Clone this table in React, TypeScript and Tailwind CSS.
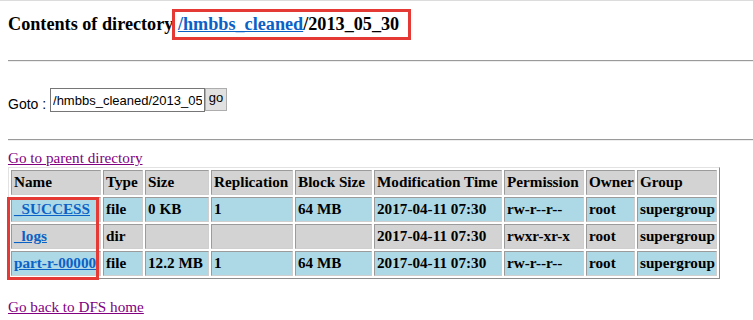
import React from 'react';

type Entry = {
  name: string;
  type: string;
  size: string;
  rep: string;
  block: string;
  time: string;
  perm: string;
  owner: string;
  group: string;
  dir: boolean;
};

const entries: Entry[] = [
  { name: '_SUCCESS', type: 'file', size: '0 KB', rep: '1', block: '64 MB', time: '2017-04-11 07:30', perm: 'rw-r--r--', owner: 'root', group: 'supergroup', dir: false },
  { name: '_logs', type: 'dir', size: '', rep: '', block: '', time: '2017-04-11 07:30', perm: 'rwxr-xr-x', owner: 'root', group: 'supergroup', dir: true },
  { name: 'part-r-00000', type: 'file', size: '12.2 MB', rep: '1', block: '64 MB', time: '2017-04-11 07:30', perm: 'rw-r--r--', owner: 'root', group: 'supergroup', dir: false },
];

const cell =
  'h-[25px] px-[2px] py-0 text-left align-middle font-bold text-[15.2px] whitespace-nowrap overflow-hidden border border-t-[#9b9b9b] border-l-[#9b9b9b] border-b-[#cfcfcf] border-r-[#cfcfcf]';

export default function App() {
  return (
    <div className="relative w-[753px] h-[320px] overflow-hidden bg-white text-black font-['Liberation_Serif',serif] text-[15.2px]">
      <div className="h-px bg-[#dcdcdc]" />

      {/* heading */}
      <div className="mt-[13px] ml-[8px] text-[18.2px] font-bold leading-[21px] whitespace-nowrap">
        Contents of directory{' '}
        <a className="text-[#0a62c6] underline">/hmbbs_cleaned</a>/2013_05_30
      </div>

      <div className="mt-[25px] ml-[8px] h-[2px] border-t border-t-[#9a9a9a] border-b border-b-[#eeeeee]" />

      {/* goto */}
      <div className="mt-[26px] ml-[8px] flex items-start font-['Liberation_Sans',Arial,sans-serif]">
        <span className="mt-[8px] text-[14px] leading-[16px] whitespace-pre">Goto : </span>
        <input
          readOnly
          value="/hmbbs_cleaned/2013_05_30"
          className="w-[155px] h-[24px] border border-[#767676] px-[2px] text-[13px] text-black outline-none"
        />
        <button className="w-[22px] h-[23px] bg-[#e1e1e1] border border-[#adadad] text-[13px] leading-[15px] pb-[4px]">
          go
        </button>
      </div>

      <div className="mt-[27px] ml-[8px] h-[2px] border-t border-t-[#9a9a9a] border-b border-b-[#eeeeee]" />

      <div className="mt-[7px] ml-[8px] leading-[19px]">
        <a className="text-[#800080] underline">Go to parent directory</a>
      </div>

      {/* listing */}
      <table className="ml-[8px] w-[712px] table-fixed border-separate border-spacing-[2px] border border-t-[#e2e2e2] border-l-[#e2e2e2] border-b-[#8c8c8c] border-r-[#8c8c8c]">
        <thead>
          <tr className="bg-[#d3d3d3]">
            <th className={`${cell} w-[90px]`}>Name</th>
            <th className={`${cell} w-[40px]`}>Type</th>
            <th className={`${cell} w-[64px]`}>Size</th>
            <th className={`${cell} w-[82px]`}>Replication</th>
            <th className={`${cell} w-[77px]`}>Block Size</th>
            <th className={`${cell} w-[128px]`}>Modification Time</th>
            <th className={`${cell} w-[80px]`}>Permission</th>
            <th className={`${cell} w-[49px]`}>Owner</th>
            <th className={`${cell} w-[80px]`}>Group</th>
          </tr>
        </thead>
        <tbody>
          {entries.map((e) => (
            <tr key={e.name} className={e.dir ? 'bg-[#d3d3d3]' : 'bg-[#add8e6]'}>
              <td className={cell}>
                <a className="text-[#0a62c6] underline">{e.name}</a>
              </td>
              <td className={cell}>{e.type}</td>
              <td className={cell}>{e.size}</td>
              <td className={cell}>{e.rep}</td>
              <td className={cell}>{e.block}</td>
              <td className={cell}>{e.time}</td>
              <td className={cell}>{e.perm}</td>
              <td className={cell}>{e.owner}</td>
              <td className={cell}>{e.group}</td>
            </tr>
          ))}
        </tbody>
      </table>

      <div className="mt-[18px] ml-[8px] leading-[19px]">
        <a className="text-[#800080] underline">Go back to DFS home</a>
      </div>

      {/* red annotation boxes */}
      <div className="absolute left-[172px] top-[9px] w-[239px] h-[31px] border-[3px] border-[#e53935] pointer-events-none" />
      <div className="absolute left-[7px] top-[197px] w-[92px] h-[83px] border-[3px] border-[#e53935] pointer-events-none" />
    </div>
  );
}
